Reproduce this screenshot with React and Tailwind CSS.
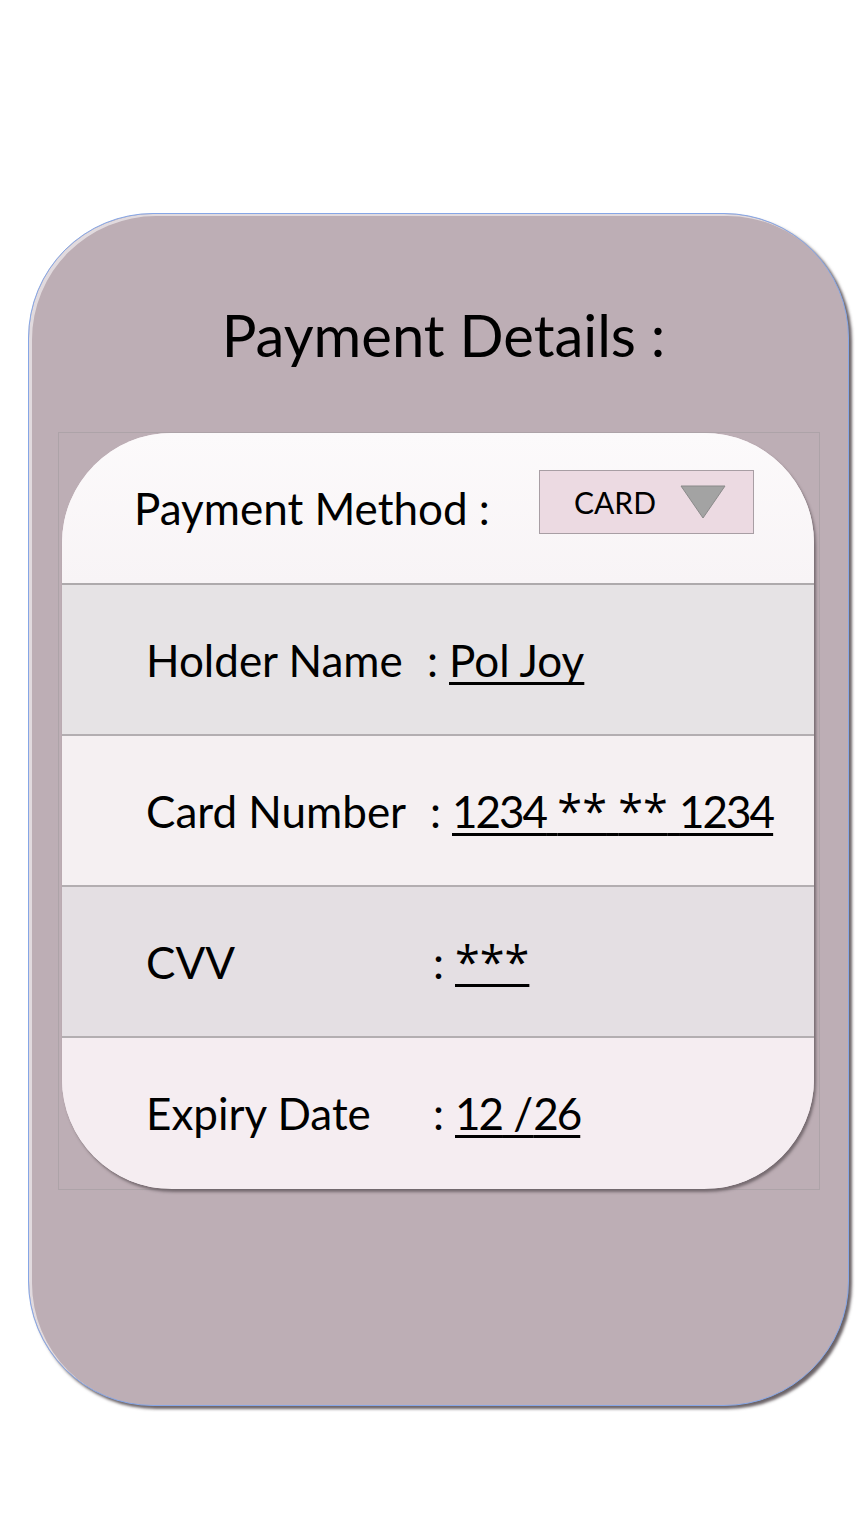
// Payment details card, drawn as a single mobile mock screen.

const rows = [
  { label: 'Holder Name', value: 'Pol Joy', labelW: 'w-[281px]', bg: 'bg-[#e6e3e5]' },
  { label: 'Card Number', value: '1234 ** ** 1234', labelW: 'w-[284px]', bg: 'bg-[#f5f0f2]' },
  { label: 'CVV', value: '***', labelW: 'w-[287px]', bg: 'bg-[#e4dfe3]' },
  { label: 'Expiry Date', value: '12 /26', labelW: 'w-[287px]', bg: 'bg-[#f5edf1]' },
];

// Lato's asterisks are tiny and its digits wide; the mock's are not
function Value({ text }) {
  const parts = text.split(/(\*+|\d+)/).filter(Boolean);
  return (
    <span className="underline decoration-[3px] underline-offset-[5px] [text-decoration-skip-ink:none]">
      {parts.map((p, i) => {
        if (p[0] === '*') return <span key={i} className="font-['Open_Sans',sans-serif] text-[45px]">{p}</span>;
        if (/\d/.test(p[0])) return <span key={i} className="tracking-[-2px]">{p}</span>;
        return <span key={i}>{p}</span>;
      })}
    </span>
  );
}

export default function App() {
  return (
    <div className="min-h-[1536px] bg-white pt-[213px] pl-[28px] font-['Lato',sans-serif] text-black">
      <div className="w-[821px] h-[1193px] rounded-[125px] bg-[#bdaeb5] border border-[#86a6e6] shadow-[inset_3px_2px_0_rgba(255,255,255,0.55),3px_3px_3px_rgba(70,60,65,0.8)]">
        <div className="pt-[92px] h-[218px] text-center">
          <h1 className="text-[58px] leading-none font-normal pl-[10px]">Payment Details :</h1>
        </div>

        <div className="ml-[29px] w-[762px] h-[758px] border border-[#ada3a8] pl-[3px]">
          <div className="w-[752px] h-[756px] rounded-[110px] overflow-hidden bg-[#f5edf1] shadow-[2px_3px_3px_rgba(80,70,75,0.65)]">
            <div className="h-[152px] border-b-2 border-[#aeaaac] bg-gradient-to-b from-[#fcfafb] to-[#f8f4f6] flex items-start pl-[72px]">
              <span className="w-[405px] mt-[53px] text-[44px] leading-none">Payment Method :</span>
              <div className="mt-[37px] w-[215px] h-[64px] bg-[#ecdae2] border border-[#a89ea4] flex items-center justify-between pl-[34px] pr-[27px]">
                <span className="text-[30px] leading-none">CARD</span>
                <svg width="46" height="34" viewBox="0 0 46 34">
                  <polygon points="1,1 45,1 23,33" fill="#a3a3a3" stroke="#8a8a8a" strokeWidth="1" />
                </svg>
              </div>
            </div>

            {rows.map((r, i) => (
              <div
                key={r.label}
                className={`${r.bg} ${i < rows.length - 1 ? 'h-[151px] border-b-2 border-[#b3aeb1]' : 'h-[150px]'} flex items-center pl-[84px] text-[44px] leading-none`}
              >
                <span className={r.labelW}>{r.label}</span>
                <span className="w-[22px]">:</span>
                <Value text={r.value} />
              </div>
            ))}
          </div>
        </div>
      </div>
    </div>
  );
}
